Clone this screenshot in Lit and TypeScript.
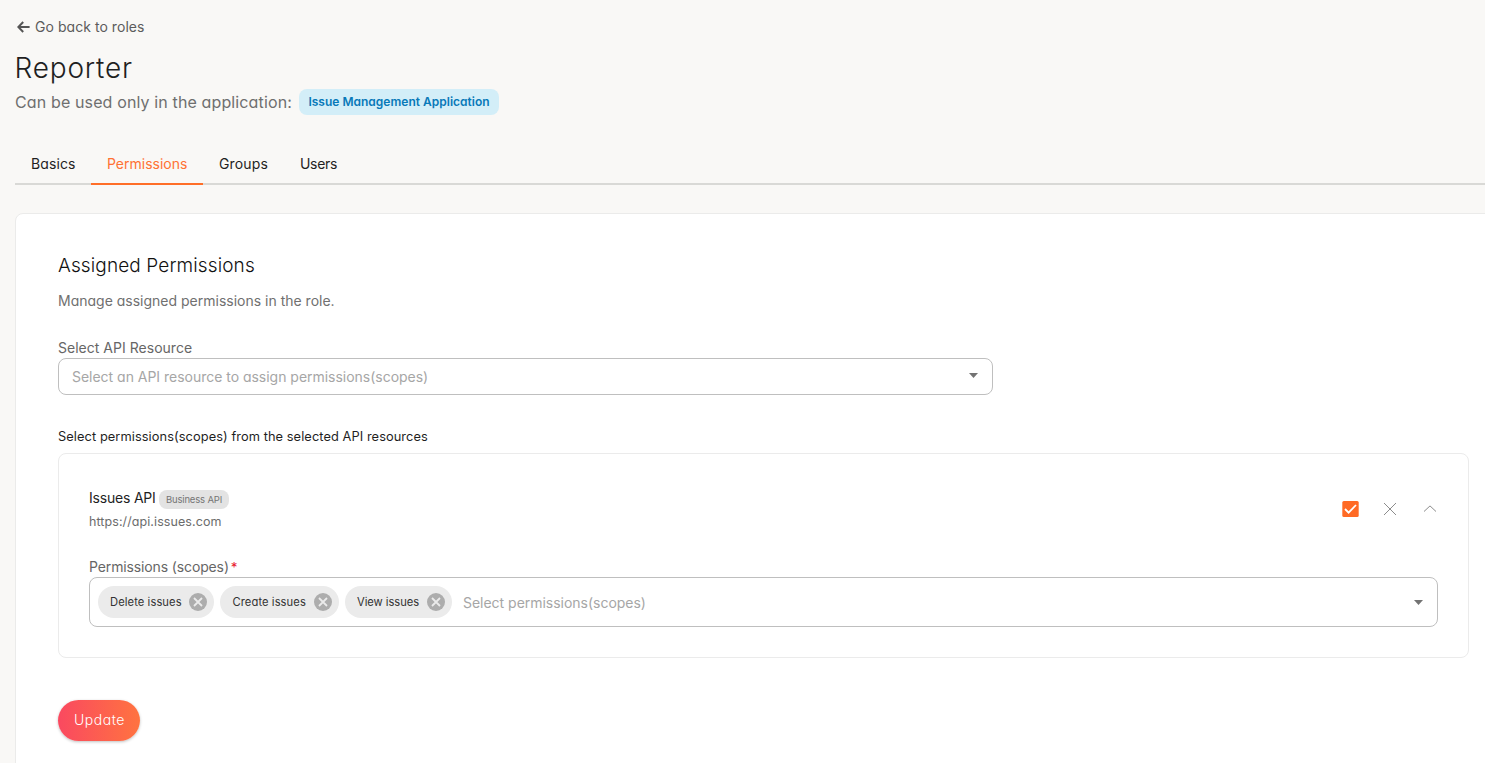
import { LitElement, html, css } from "lit";
import { customElement, property, state } from "lit/decorators.js";
import { classMap } from "lit/directives/class-map.js";

@customElement("scope-chip")
export class ScopeChip extends LitElement {
  @property() label = "";

  static styles = css`
    :host {
      display: flex;
      align-items: center;
      box-sizing: border-box;
      height: 32px;
      padding: 0 7px 0 12px;
      border-radius: 16px;
      background: #ebebeb;
      color: #333;
      font-size: 11.2px;
      letter-spacing: 0.08px;
      white-space: nowrap;
    }
    .label {
      flex: 1;
      line-height: 16px;
    }
    .remove {
      display: block;
      width: 18px;
      height: 18px;
    }
  `;

  render() {
    return html`
      <span class="label">${this.label}</span>
      <svg class="remove" viewBox="0 0 18 18">
        <circle cx="9" cy="9" r="9" fill="#adadad" />
        <path d="M5 5l8 8M13 5l-8 8" stroke="#ebebeb" stroke-width="1.8" />
      </svg>
    `;
  }
}

@customElement("app-root")
export class AppRoot extends LitElement {
  @state() private activeTab = "permissions";

  private tabs = [
    { id: "basics", label: "Basics" },
    { id: "permissions", label: "Permissions" },
    { id: "groups", label: "Groups" },
    { id: "users", label: "Users" },
  ];

  static styles = css`
    :host {
      display: block;
      box-sizing: border-box;
      height: 763px;
      overflow: hidden;
      padding: 17px 0 0 15px;
      background: #f9f8f6;
      color: #1f1f1f;
      font-family: Inter, "Open Sans", sans-serif;
      font-feature-settings: "cv11";
      font-size: 14px;
      font-weight: 400;
      line-height: 20px;
      letter-spacing: 0;
      white-space: nowrap;
    }
    svg {
      display: block;
    }
    .back {
      display: flex;
      align-items: center;
      height: 20px;
      padding-left: 2px;
      gap: 5px;
      color: #5c5c5c;
      letter-spacing: 0.05px;
    }
    .title {
      margin: 13px 0 0 -0.5px;
      padding-top: 1px;
      font-size: 28px;
      font-weight: 300;
      line-height: 34px;
      letter-spacing: 0.8px;
    }
    .subtitle {
      display: flex;
      align-items: center;
      height: 26px;
      margin-top: 4px;
      color: #6f6f6f;
      font-size: 16px;
      letter-spacing: 0.13px;
    }
    .usage {
      width: 284px;
    }
    .app {
      display: flex;
      align-items: center;
      justify-content: center;
      box-sizing: border-box;
      width: 200px;
      height: 26px;
      border-radius: 8px;
      background: #d3eef8;
      color: #0879b9;
      font-size: 12px;
      font-weight: 600;
      letter-spacing: 0.01px;
    }
    .tabs {
      display: flex;
      height: 38px;
      margin-top: 30px;
      border-bottom: 2px solid #d9d9d6;
    }
    .tab {
      box-sizing: border-box;
      height: 40px;
      padding: 9px 16px;
      border-bottom: 2px solid transparent;
    }
    .basics {
      width: 76px;
      letter-spacing: 0.1px;
    }
    .permissions {
      width: 112px;
    }
    .groups {
      width: 81px;
      letter-spacing: 0.15px;
    }
    .users {
      letter-spacing: -0.3px;
    }
    .active {
      border-color: #ff6e28;
      color: #ff7233;
    }
    .card {
      box-sizing: border-box;
      width: 1600px;
      height: 620px;
      margin-top: 28px;
      padding: 39px 0 0 42px;
      border: 1px solid #ebebea;
      border-radius: 8px;
      background: #fff;
    }
    .heading {
      margin: 0;
      padding-top: 1px;
      font-size: 19px;
      font-weight: 300;
      line-height: 24px;
      letter-spacing: 0.12px;
      color: #111;
    }
    .hint {
      margin: 13px 0 27px;
      color: #707070;
    }
    .field-label {
      height: 20px;
      color: #666;
    }
    .resource-label {
      letter-spacing: 0.02px;
    }
    .select {
      display: flex;
      align-items: center;
      box-sizing: border-box;
      border: 1px solid #bfbfbf;
      border-radius: 8px;
      background: #fff;
      color: #a6a6a6;
    }
    .resource {
      width: 935px;
      height: 37px;
      padding: 0 14px 0 13px;
    }
    .placeholder {
      flex: 1;
      padding-top: 1px;
      letter-spacing: -0.02px;
    }
    .resource .arrow {
      margin-bottom: 3px;
    }
    .scopes-label {
      margin-top: 33px;
      font-size: 12.8px;
      line-height: 18px;
      letter-spacing: 0.08px;
    }
    .panel {
      box-sizing: border-box;
      width: 1411px;
      height: 205px;
      margin-top: 7px;
      padding: 34px 30px 0;
      border: 1px solid #ebebeb;
      border-radius: 8px;
    }
    .api {
      display: flex;
      justify-content: space-between;
      height: 43px;
    }
    .api-name {
      display: flex;
      height: 25px;
      letter-spacing: -0.2px;
    }
    .api-title {
      width: 70px;
    }
    .badge {
      display: flex;
      align-items: center;
      justify-content: center;
      width: 70px;
      height: 19px;
      margin-top: 2px;
      border-radius: 8px;
      background: #e3e3e3;
      color: #757575;
      font-size: 9.5px;
      letter-spacing: -0.17px;
    }
    .url {
      color: #6c6c6c;
      font-size: 12.5px;
      line-height: 18px;
      letter-spacing: 0.08px;
    }
    .actions {
      display: flex;
      align-items: center;
      gap: 28px;
      height: 41px;
      padding-right: 2px;
    }
    .actions .check {
      margin-right: -3px;
    }
    .permissions-label {
      margin-top: 26px;
      letter-spacing: -0.13px;
    }
    .required {
      margin-left: -2px;
      color: #e8222e;
      font-size: 13.5px;
    }
    .scopes {
      width: 1349px;
      height: 50px;
      padding: 0 14px 0 8px;
    }
    .chip-delete {
      width: 116px;
      margin-right: 6px;
    }
    .chip-create {
      width: 119px;
      margin-right: 6px;
      padding-left: 12.5px;
    }
    .chip-view {
      width: 107px;
      margin-right: 11px;
      letter-spacing: -0.05px;
    }
    .update {
      display: block;
      box-sizing: border-box;
      width: 82px;
      height: 41px;
      margin-top: 42px;
      padding: 0 0 1px 1px;
      border: 0;
      border-radius: 21px;
      background: linear-gradient(90deg, #fa4960, #ff7340);
      box-shadow: 0 1px 3px rgba(0, 0, 0, 0.25);
      color: #fff;
      font: inherit;
      font-weight: 300;
      font-feature-settings: "cv11";
      letter-spacing: 0.55px;
    }
  `;

  private arrow() {
    return html`<svg class="arrow" width="9" height="5" viewBox="0 0 9 5">
      <path d="M0 0h9L4.5 5z" fill="#737373" />
    </svg>`;
  }

  render() {
    return html`
      <div class="back">
        <svg width="13" height="12" viewBox="0 0 13 12">
          <path
            d="M6.2 1L1.3 6l4.9 5M1.6 6h11"
            fill="none"
            stroke="#555"
            stroke-width="2"
          />
        </svg>
        <span>Go back to roles</span>
      </div>
      <h1 class="title">Reporter</h1>
      <div class="subtitle">
        <span class="usage">Can be used only in the application:</span>
        <span class="app">Issue Management Application</span>
      </div>
      <nav class="tabs">
        ${this.tabs.map(
          (t) => html`<a
            class=${classMap({ tab: true, [t.id]: true, active: t.id === this.activeTab })}
            @click=${() => (this.activeTab = t.id)}
            >${t.label}</a
          >`
        )}
      </nav>
      <section class="card">
        <h2 class="heading">Assigned Permissions</h2>
        <div class="hint">Manage assigned permissions in the role.</div>
        <div class="field-label resource-label">Select API Resource</div>
        <div class="select resource">
          <span class="placeholder">Select an API resource to assign permissions(scopes)</span>
          ${this.arrow()}
        </div>
        <div class="scopes-label">Select permissions(scopes) from the selected API resources</div>
        <div class="panel">
          <div class="api">
            <div>
              <div class="api-name">
                <span class="api-title">Issues API</span>
                <span class="badge">Business API</span>
              </div>
              <div class="url">https://api.issues.com</div>
            </div>
            <div class="actions">
              <svg class="check" width="17" height="16" viewBox="0 0 17 16">
                <rect x="0.3" width="16.4" height="16" rx="1.5" fill="#ff6a24" />
                <path d="M3 8l3.6 3.7L14 4" fill="none" stroke="#fff" stroke-width="1.8" />
              </svg>
              <svg width="12" height="12" viewBox="0 0 12 12">
                <path d="M0 0l12 12M12 0l-12 12" stroke="#8c8c8c" stroke-width="1" />
              </svg>
              <svg width="12" height="7" viewBox="0 0 12 7">
                <path d="M0 6.5l6-5.6 6 5.6" fill="none" stroke="#8c8c8c" stroke-width="1" />
              </svg>
            </div>
          </div>
          <div class="field-label permissions-label">
            Permissions (scopes) <span class="required">*</span>
          </div>
          <div class="select scopes">
            <scope-chip class="chip-delete" label="Delete issues"></scope-chip>
            <scope-chip class="chip-create" label="Create issues"></scope-chip>
            <scope-chip class="chip-view" label="View issues"></scope-chip>
            <span class="placeholder">Select permissions(scopes)</span>
            ${this.arrow()}
          </div>
        </div>
        <button class="update">Update</button>
      </section>
    `;
  }
}
